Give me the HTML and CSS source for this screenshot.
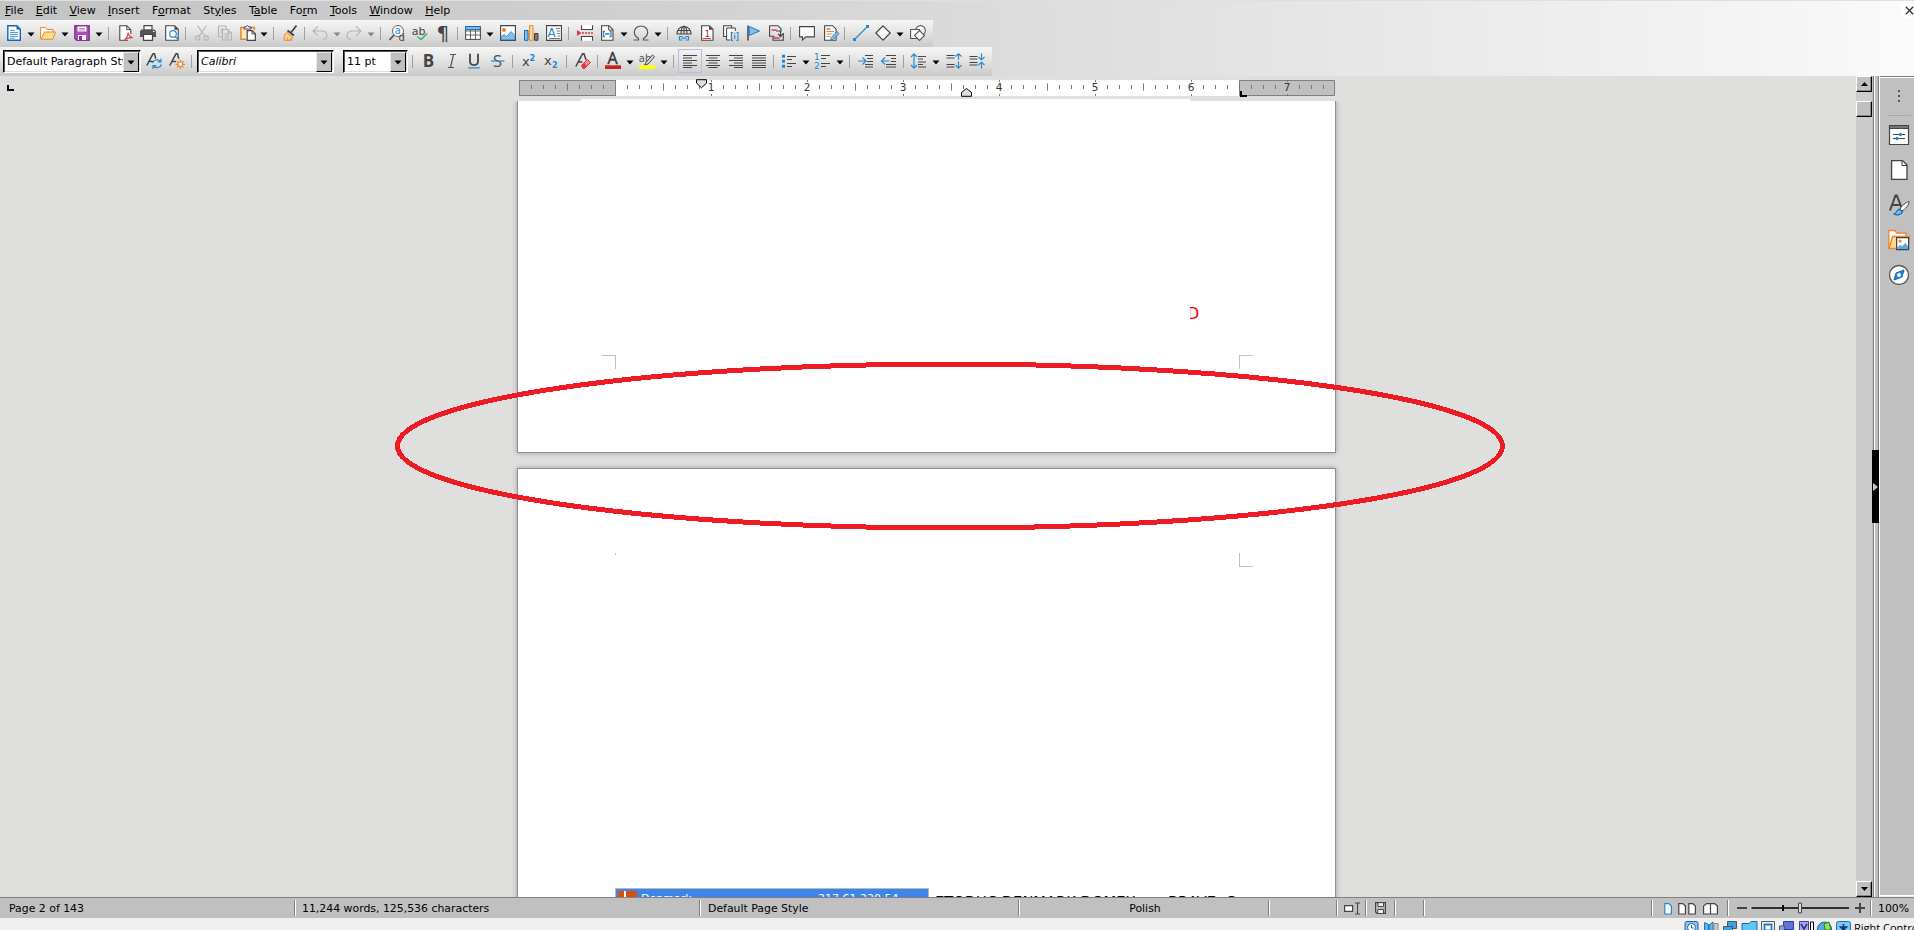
FILE: index.html
```html
<!DOCTYPE html>
<html lang="en">
<head>
  <meta charset="UTF-8">
  <title>Writer</title>
  <link rel="stylesheet" href="styles.css">
</head>
<body>

<!-- Shared symbols -->
<svg class="defs" width="0" height="0">
  <symbol id="arrow" viewBox="0 0 8 5"><path d="M.5 .5h7L4 4.500z"/></symbol>
</svg>

<div class="app">

  <header class="header">
    <nav class="menubar">
      <span><u>F</u>ile</span>
      <span><u>E</u>dit</span>
      <span><u>V</u>iew</span>
      <span><u>I</u>nsert</span>
      <span>F<u>o</u>rmat</span>
      <span>St<u>y</u>les</span>
      <span>T<u>a</u>ble</span>
      <span>Fo<u>r</u>m</span>
      <span><u>T</u>ools</span>
      <span><u>W</u>indow</span>
      <span><u>H</u>elp</span>
      <button class="close"><svg width="9" height="9" viewBox="0 0 9 9"><path d="M.8 .8l7.400 7.400M8.200 .8L.8 8.200" stroke="#333" stroke-width="1.300"/></svg></button>
    </nav>

    <!-- Standard toolbar -->
    <div class="toolbar standard">
      <svg class="icon" viewBox="0 0 16 16"><path d="M1.800 .7h9l3.500 3.500v11.100H1.800z" fill="#fff" stroke="#1068b5" stroke-width="1.400"/><path d="M10.500 .5v4h4z" fill="#1068b5"/><path d="M4 5.500h5M4 7.500h8M4 9.500h8M4 11.500h8M4 13.200h5" stroke="#3f93d4" stroke-width=".9"/></svg>
      <svg class="drop"><use href="#arrow"/></svg>
      <svg class="icon" viewBox="0 0 16 16"><path d="M.6 14V2.500h5l1.500 2h6V7" fill="#fff" stroke="#ed8733"/><path d="M.8 14.300L4.500 7h11l-2.600 7.300z" fill="#fadc8e" stroke="#ed8733"/></svg>
      <svg class="drop"><use href="#arrow"/></svg>
      <svg class="icon" viewBox="0 0 16 16"><path d="M.8 .8h14.400v14.400H2.600L.8 13.400z" fill="#a84fb5" stroke="#8d2f9c" stroke-width="1.400"/><path d="M3.500 1.500h9v5h-9z" fill="#fff"/><path d="M5 3.500h6M5 5h6" stroke="#8d2f9c" stroke-width=".6"/><path d="M4 10h8v5H4z" fill="#fff"/><path d="M5 11h3v4H5z" fill="#8d2f9c"/></svg>
      <svg class="drop"><use href="#arrow"/></svg>
      <i class="sep"></i>
      <svg class="icon" viewBox="0 0 16 16"><path d="M10 15.300H1.800V.7h7l4 4V9" fill="#fff" stroke="#444" stroke-width="1.100"/><path d="M8.800 .7v4h4" fill="none" stroke="#444"/><path d="M6.500 14.800C9 13 10.500 9.500 9.800 7.500c1 3 2.500 5 5 5.200-2.800-.4-6 .5-8.300 2.100z" fill="none" stroke="#dd3b42" stroke-width="1.100"/></svg>
      <svg class="icon" viewBox="0 0 16 16"><path d="M4 .7h8V5H4z" fill="#fff" stroke="#444" stroke-width="1.200"/><path d="M1.500 4.500h13L16 6v6h-3v-2H3v2H0V6z" fill="#555"/><path d="M3.500 9.500h9v5.800h-9z" fill="#fff" stroke="#444" stroke-width="1.200"/><path d="M13 6.500h1.500" stroke="#fff"/></svg>
      <svg class="icon" viewBox="0 0 16 16"><path d="M1.700 .7h9l3.500 3.500v11.100H1.700z" fill="#fff" stroke="#444" stroke-width="1.100"/><path d="M10.500 .7v4h4z" fill="#444"/><circle cx="9" cy="9" r="3.300" fill="#fff" stroke="#2a8dd0" stroke-width="1.200"/><path d="M11.300 11.500l3.500 3.500" stroke="#2a8dd0" stroke-width="1.500"/></svg>
      <i class="sep"></i>
      <svg class="icon off" viewBox="0 0 16 16"><path d="M3.500 .5l7.500 11M12.500 .5L5 11.500"/><circle cx="3.800" cy="13" r="2.100"/><circle cx="12.200" cy="13" r="2.100"/></svg>
      <svg class="icon off" viewBox="0 0 16 16"><path d="M5 11.500H1.500V1h7.500v3M5.500 4.500H11l3.500 3.500v7h-9zM11 4.500V8h3.500M7.500 9h5M7.500 11h5M7.500 13h5M3.500 4h3M3.500 6H5M3.500 8H5"/></svg>
      <svg class="icon" viewBox="0 0 16 16"><path d="M6 14.300H.9V2.500h13.500V5" fill="#fde9c8" stroke="#e8872f" stroke-width="1.500"/><path d="M4 4V2h2L7.500 .5 9 2h2v2z" fill="#fff" stroke="#444"/><path d="M7.200 5.600h5l3.100 3.100v6.600H7.200z" fill="#fff" stroke="#444" stroke-width="1.200"/><path d="M12 5.500v3.300h3.300" fill="none" stroke="#444"/></svg>
      <svg class="drop"><use href="#arrow"/></svg>
      <i class="sep"></i>
      <svg class="icon" viewBox="0 0 16 16"><path d="M14.500 .5L9 7.500" stroke="#444" stroke-width="1.800"/><path d="M5.500 5.500l6.500 5" stroke="#444" stroke-width="2"/><path d="M4.500 7.500l6 4.500-1 3.300H2.500C1.500 12 2.500 9 4.500 7.500z" fill="#fbd08b" stroke="#ed8733"/><path d="M5 15l1-3M8 15l.5-2" stroke="#ed8733" stroke-width=".8"/></svg>
      <i class="sep"></i>
      <svg class="icon off" viewBox="0 0 16 16"><path d="M6 1.500L1 6l5 4.500M1 6h9c3 0 5 2 5 4.500S13 14.500 11 14.500"/></svg>
      <svg class="drop gray"><use href="#arrow"/></svg>
      <svg class="icon off" viewBox="0 0 16 16"><path d="M10 1.500L15 6l-5 4.500M15 6H6c-3 0-5 2-5 4.500S3 14.500 5 14.500"/></svg>
      <svg class="drop gray"><use href="#arrow"/></svg>
      <i class="sep"></i>
      <svg class="icon" viewBox="0 0 16 16"><circle cx="9" cy="6" r="5.500" fill="#fff" stroke="#666"/><path d="M5 10L.5 15" stroke="#444" stroke-width="1.500"/><text x="5.800" y="9" font-size="10" fill="#2488d0">a</text><text x="9.500" y="16" font-size="10" fill="#444">d</text></svg>
      <svg class="icon" viewBox="0 0 16 16"><text x="-.2" y="9.500" font-size="11" fill="#444">ab</text><path d="M5.500 11.500l3.500 3 6.200-6" fill="none" stroke="#3fae5a" stroke-width="1.400"/></svg>
      <svg class="icon" viewBox="0 0 16 16"><text x="1.500" y="14.500" font-size="20" fill="#444">¶</text></svg>
      <i class="sep"></i>
      <svg class="icon" viewBox="0 0 16 16"><path d="M.6 1.600h14.800v12.800H.6z" fill="#fff" stroke="#444"/><path d="M.5 6h15M.5 10h15M5.500 4v10M10.500 4v10" stroke="#555" stroke-width=".9"/><path d="M.6 1.600h14.800v3H.6z" fill="#83beec" stroke="#1068b5"/></svg>
      <svg class="drop"><use href="#arrow"/></svg>
      <svg class="icon" viewBox="0 0 16 16"><path d="M.6 .6h14.800v14.800H.6z" fill="#fff" stroke="#444" stroke-width="1.100"/><circle cx="4" cy="5" r="2" fill="#ed8733"/><path d="M1.200 14.800v-3L4 9.500l2.500 2 4.500-5 3.800 4v4.300z" fill="#83beec" stroke="#2a7fc0" stroke-width=".8"/></svg>
      <svg class="icon" viewBox="0 0 16 16"><path d="M1.500 5.500H5v9.800H1.500z" fill="#83beec" stroke="#1068b5"/><path d="M6.500 .6H10v14.700H6.500z" fill="#fadc8e" stroke="#ed8733"/><path d="M11.500 8.500H15v6.800h-3.500z" fill="#777" stroke="#444"/></svg>
      <svg class="icon" viewBox="0 0 16 16"><path d="M.6 .6h14.800v14.800H.6z" fill="#fff" stroke="#444" stroke-width="1.100"/><text x="1.500" y="12" font-size="12" fill="#2488d0">A</text><path d="M10 3.500h4M10.500 6h3.500M11 8.500h3M11.500 11h2.500M3 13.500h11" stroke="#666" stroke-width=".9"/></svg>
      <i class="sep"></i>
      <svg class="icon" viewBox="0 0 16 16"><path d="M4.500 .2v4.300h11V.2M4.500 15.800v-4.300h11v4.300" fill="#fff" stroke="#444" stroke-width="1.100"/><path d="M0 5l4.500 3L0 11z" fill="#dd3b42"/><path d="M5 8h11" stroke="#dd3b42" stroke-width="1.400" stroke-dasharray="2 1"/></svg>
      <svg class="icon" viewBox="0 0 16 16"><path d="M2.600 .7H10l4 4v10.600H2.600z" fill="#fff" stroke="#444" stroke-width="1.100"/><path d="M9.700 .7v4.300H14" fill="none" stroke="#444"/><path d="M6 6.500H4.500v5H6M10.500 6.500H12v5h-1.500M6 9h4.500" fill="none" stroke="#2488d0" stroke-width="1.300"/></svg>
      <svg class="drop"><use href="#arrow"/></svg>
      <svg class="icon" viewBox="0 0 16 16"><path d="M.5 15h5v-1.500C3 12 1.300 9.800 1.300 7 1.300 3.500 4.200 1 8 1s6.700 2.500 6.700 6c0 2.800-1.700 5-4.200 6.500V15h5" fill="none" stroke="#555" stroke-width="1.200"/></svg>
      <svg class="drop"><use href="#arrow"/></svg>
      <i class="sep"></i>
      <svg class="icon" viewBox="0 0 16 16"><path d="M1 9a7 7.500 0 0 1 14 0zM1.500 5.500h13M8 1v8M5 9c0-4 1-7 3-8 2 1 3 4 3 8" fill="none" stroke="#444" stroke-width="1.100"/><path d="M6.500 11.500h-3v3.500h3M9.500 11.500h3v3.500h-3M5.500 13.200h5" fill="none" stroke="#2488d0" stroke-width="1.200"/></svg>
      <svg class="icon" viewBox="0 0 16 16"><path d="M2.600 .7h7.900l3.500 3.500v11.100H2.600z" fill="#fff" stroke="#444" stroke-width="1.100"/><path d="M10 .7v4h4z" fill="#444"/><path d="M4 13.500h8" stroke="#dd3b42"/><text x="5.500" y="11.500" font-size="9" fill="#c9211e">1</text></svg>
      <svg class="icon" viewBox="0 0 16 16"><path d="M3 11.500H.6V.7h8V3" fill="#fff" stroke="#444" stroke-width="1.100"/><path d="M3.600 3h8.700v4H7v8H3.600z" fill="#fff"/><path d="M7 15H3.600V3h8.700v3" fill="none" stroke="#444"/><path d="M10 7.500H8.500v7.900H10M13.500 7.500H15v7.900h-1.500M11.700 10v4M11.700 8v1" fill="none" stroke="#2488d0" stroke-width="1.100"/></svg>
      <svg class="icon" viewBox="0 0 16 16"><path d="M2 .5v15" stroke="#444" stroke-width="1.500"/><path d="M3.200 1.500L13.500 6 3.200 10.500z" fill="#83beec" stroke="#1f79c4"/></svg>
      <svg class="icon" viewBox="0 0 16 16"><path d="M1.600 .7h8.400l3 3v3M1.600 .7v10.600h5M5 12v3.300h10.300V8" fill="none" stroke="#444" stroke-width="1.100"/><path d="M3.500 5h5M5.500 13h6" stroke="#dd3b42" stroke-width="1.500"/><path d="M8 6h4.500v5M10 8.800l2.500 2.700L15 8.800" fill="none" stroke="#444" stroke-width="1.200"/></svg>
      <i class="sep"></i>
      <svg class="icon" viewBox="0 0 16 16"><path d="M.6 1.600h14.800v10.300H7L3.500 15v-3.100H.6z" fill="#fff" stroke="#444" stroke-width="1.100"/></svg>
      <svg class="icon" viewBox="0 0 16 16"><path d="M1.600 .7h8l3.500 3.500v11.100H1.600z" fill="#fff" stroke="#444" stroke-width="1.100"/><path d="M3.500 4h4" stroke="#555"/><path d="M3.500 6.500h7.500M3.500 9h6M3.500 11.500h4" stroke="#ed8733" stroke-width="1.200"/><path d="M7.500 15.500l.8-3 5.700-6 2 2-5.700 6z" fill="#83beec" stroke="#2a7fc0"/></svg>
      <i class="sep"></i>
      <svg class="icon" viewBox="0 0 16 16"><path d="M1.500 14.500l13-13" stroke="#2a8dd0" stroke-width="1.200"/><path d="M0 13h3v3H0zM13 0h3v3h-3z" fill="#2488d0"/></svg>
      <svg class="icon" viewBox="0 0 16 16"><path d="M8 .8L15.200 8 8 15.200.8 8z" fill="#fff" stroke="#444" stroke-width="1.200"/></svg>
      <svg class="drop"><use href="#arrow"/></svg>
      <svg class="icon" viewBox="0 0 16 16"><circle cx="10.500" cy="5.500" r="4.900" fill="#fff" stroke="#555" stroke-width="1.100"/><path d="M.6 4.500h9v9h-9z" fill="#fff" stroke="#555" stroke-width="1.100"/><path d="M9.500 5.500l5 5-5 5-5-5z" fill="#fff" stroke="#555" stroke-width="1.100"/></svg>
    </div>

    <!-- Formatting toolbar -->
    <div class="toolbar formatting">
      <div class="combo style-combo"><span>Default Paragraph Style</span><b><svg class="drop"><use href="#arrow"/></svg></b></div>
      <svg class="icon" viewBox="0 0 16 16"><path d="M.8 12.500L7 .8h1.500l1.200 5M3 8.500h4" fill="none" stroke="#444" stroke-width="1.500"/><path d="M6.500 10a4.500 4 0 0 1 8-1.500M15 5.500v3.300h-3.300M15.500 11.500a4.500 4 0 0 1-8 1.500M7 16v-3.300h3.300" fill="none" stroke="#2488d0" stroke-width="1.200"/></svg>
      <svg class="icon" viewBox="0 0 16 16"><path d="M.8 12.500L7 .8h1.500l1.200 5M3 8.500h4" fill="none" stroke="#444" stroke-width="1.500"/><circle cx="11.300" cy="11.300" r="2.300" fill="#fff" stroke="#ed8733" stroke-width="1.200"/><path d="M11.300 6.500V9M11.300 13.600V16M6.500 11.300H9M13.600 11.300H16M8 8l1.500 1.500M13 13l1.600 1.600M14.600 8L13 9.500M9.500 13L8 14.600" stroke="#ed8733" stroke-width="1.200"/></svg>
      <i class="sep"></i>
      <div class="combo font-combo"><em>Calibri</em><b><svg class="drop"><use href="#arrow"/></svg></b></div>
      <div class="combo size-combo"><span>11 pt</span><b><svg class="drop"><use href="#arrow"/></svg></b></div>
      <i class="sep"></i>
      <svg class="icon" viewBox="0 0 16 16"><text x="1.800" y="14" font-size="17" font-weight="bold" class="sans" fill="#444">B</text></svg>
      <svg class="icon" viewBox="0 0 16 16"><path d="M6 1.500h6M4 14.500h6M9.500 1.500L6.500 14.500" stroke="#555" stroke-width="1.200"/></svg>
      <svg class="icon" viewBox="0 0 16 16"><path d="M4 .8v7.500c0 5 8 5 8 0V.8" fill="none" stroke="#444" stroke-width="1.800"/><path d="M2 14.900h12" stroke="#2488d0" stroke-width="1.200"/></svg>
      <svg class="icon" viewBox="0 0 16 16"><text x="2.800" y="14" font-size="17" class="sans" fill="#555">S</text><path d="M1 8h13.500" stroke="#2488d0" stroke-width="1.200"/></svg>
      <i class="sep"></i>
      <svg class="icon" viewBox="0 0 16 16"><text x="0" y="12.500" font-size="13" fill="#444">x</text><text x="7.500" y="7.500" font-size="8" font-weight="bold" fill="#2488d0">2</text></svg>
      <svg class="icon" viewBox="0 0 16 16"><text x="0" y="11.500" font-size="13" fill="#444">x</text><text x="8" y="15" font-size="8" font-weight="bold" fill="#2488d0">2</text></svg>
      <i class="sep"></i>
      <svg class="icon" viewBox="0 0 16 16"><path d="M.8 13.500L7.500 .8H9l2 6M3.500 9h4" fill="none" stroke="#444" stroke-width="1.500"/><path d="M6.500 12.500l6-6 3 3-6 6h-1.500z" fill="#f28b8f" stroke="#dd2b33"/><path d="M6.500 12.500l2.500-2.500 3 3-2.500 2.500h-1.500z" fill="#dd3b42"/></svg>
      <i class="sep"></i>
      <svg class="icon" viewBox="0 0 16 16"><text x="2.500" y="11" font-size="16" class="sans" fill="#333" stroke="#333" stroke-width=".4">A</text><path d="M0 12.300h16v3.700H0z" fill="#c9211e"/></svg>
      <svg class="drop"><use href="#arrow"/></svg>
      <svg class="icon" viewBox="0 0 16 16"><text x="-.2" y="8.500" font-size="10" fill="#555">ab</text><path d="M7 9.500l6.500-7.500 2 1.800L9 11l-3.500 1z" fill="#ddd" stroke="#444"/><path d="M0 12.300h16v3.700H0z" fill="#ff0"/></svg>
      <svg class="drop"><use href="#arrow"/></svg>
      <i class="sep"></i>
      <svg class="icon active" viewBox="0 0 16 16"><path class="lines" d="M1 2.500h14M1 5h9M1 7.500h14M1 10h9M1 12.500h14M1 14.500h9"/></svg>
      <svg class="icon" viewBox="0 0 16 16"><path class="lines" d="M1 2.500h14M3.500 5h9M1 7.500h14M3.500 10h9M1 12.500h14M3.500 14.500h9"/></svg>
      <svg class="icon" viewBox="0 0 16 16"><path class="lines" d="M1 2.500h14M6 5h9M1 7.500h14M6 10h9M1 12.500h14M6 14.500h9"/></svg>
      <svg class="icon" viewBox="0 0 16 16"><path class="lines" d="M1 2.500h14M1 5h14M1 7.500h14M1 10h14M1 12.500h14M1 14.500h14"/></svg>
      <i class="sep"></i>
      <svg class="icon" viewBox="0 0 16 16"><path d="M1 1.800h3v3H1zM1 6.800h3v3H1zM1 11.800h3v3H1z" fill="#2488d0"/><path class="lines" d="M6 3.500h9M6 6.500h5M6 10.500h9M6 13.500h5"/></svg>
      <svg class="drop"><use href="#arrow"/></svg>
      <svg class="icon" viewBox="0 0 16 16"><text x="0" y="7.200" font-size="9" fill="#2488d0">1</text><text x="0" y="16" font-size="9" fill="#2488d0">2</text><path class="lines" d="M7 2.500h9M7 5.500h5M7 10.500h9M7 13.500h5"/></svg>
      <svg class="drop"><use href="#arrow"/></svg>
      <i class="sep"></i>
      <svg class="icon" viewBox="0 0 16 16"><path class="lines" d="M8 2.500h8M10 5.500h6M10 8.500h6M8 11.500h8M8 14h8"/><path class="blue" d="M1 8h8M5.500 4.500L9 8l-3.500 3.500"/></svg>
      <svg class="icon" viewBox="0 0 16 16"><path class="lines" d="M6 2.500h10M11 5.500h5M11 8.500h5M6 11.500h10M6 14h10"/><path class="blue" d="M9.500 8h-8M5 4.500L1.500 8 5 11.500"/></svg>
      <i class="sep"></i>
      <svg class="icon" viewBox="0 0 16 16"><path class="lines" d="M8 3.500h8M8 6h5M8 9h8M8 11.500h5M8 14h8"/><path class="blue" d="M4 .8v14.400M1 4l3-3.200L7 4M1 12l3 3.200L7 12"/></svg>
      <svg class="drop"><use href="#arrow"/></svg>
      <svg class="icon" viewBox="0 0 16 16"><path class="lines" d="M.5 2.500h8M.5 5h8M.5 11.500h8M.5 14h8"/><path class="blue" d="M12.500 .8v6M9.500 3.500l3-2.700 3 2.700M12.500 8.500v6.500M9.500 12.200l3 3 3-3"/></svg>
      <svg class="icon" viewBox="0 0 16 16"><path class="lines" d="M.5 3.500h8M.5 6h8M.5 9.500h8M.5 12h8"/><path class="blue" d="M12.500 .5v6M9.500 4l3 2.800 3-2.800M12.500 15.500v-6M9.500 12l3-2.800 3 2.800"/></svg>
    </div>
  </header>

  <div class="workspace">
    <main class="canvas">
      <div class="ruler-row">
        <svg class="tab-type" width="7" height="6"><path d="M0 0h2v4h5v2H0z"/></svg>
        <svg class="ruler" width="816" height="19" viewBox="519 80 816 19">
          <defs>
            <pattern id="ticks" x="615" y="80" width="96" height="16" patternUnits="userSpaceOnUse">
              <path d="M12.500 5v4M24.500 5v4M36.500 5v4M60.500 5v4M72.500 5v4M84.500 5v4M48.500 3.500v7M.5 0v2M.5 14v2" stroke="#777"/>
            </pattern>
          </defs>
          <path d="M616 80h623v16H616z" fill="#fff"/>
          <path d="M519.500 80.500h96v15h-96zM1239.500 80.500h95v15h-95z" fill="#c0c0c0" stroke="#808080"/>
          <path d="M521 80h813v16H521z" fill="url(#ticks)"/>
          <g class="digits">
            <text x="711" y="90.500">1</text><text x="807" y="90.500">2</text><text x="903" y="90.500">3</text><text x="999" y="90.500">4</text><text x="1095" y="90.500">5</text><text x="1191" y="90.500">6</text><text x="1287" y="90.500">7</text>
          </g>
          <path d="M696.500 79.700h10v3.500l-5 4.500-5-4.500z" fill="#dfdfdd" stroke="#000"/>
          <path d="M961.500 96.300h10v-3.800l-5-4-5 4z" fill="#dfdfdd" stroke="#000"/>
          <path d="M1240 91h2v4h5v2h-7z"/>
        </svg>
      </div>

      <div class="page-edge"></div>
      <section class="page page-one">
        <i class="crop crop-bl"></i>
        <i class="crop crop-br"></i>
        <div class="stray"><span>D</span></div>
      </section>
      <section class="page page-two">
        <i class="crop crop-dot"></i>
        <i class="crop crop-tr"></i>
        <div class="row">
          <div class="selected">
            <i class="flag"></i>
            <span class="country">Denmark</span>
            <span class="ip">217.61.220.54</span>
          </div>
          <span class="note">ETODUC DENMARK DOMEX</span>
          <span class="note brave">BRAVE &nbsp;C</span>
        </div>
      </section>

      <svg class="ellipse" width="1112" height="170" viewBox="0 0 1112 170"><ellipse cx="556" cy="85" rx="552.500" ry="82" fill="none" stroke="#ed1c24" stroke-width="5" shape-rendering="crispEdges"/></svg>
    </main>

    <div class="scrollbar">
      <b class="sbtn"><svg width="7" height="4"><path d="M3.500 0L7 4H0z"/></svg></b>
      <b class="sbtn thumb"></b>
      <b class="sbtn last"><svg width="7" height="4"><path d="M0 0h7L3.500 4z"/></svg></b>
    </div>
    <div class="splitter"><div class="grip"><svg width="5" height="8"><path d="M0 0l5 4-5 4z" fill="#ccc"/></svg></div></div>

    <aside class="sidebar">
      <svg class="dots" width="2" height="14"><path d="M0 0h2v2H0zM0 5h2v2H0zM0 10h2v2H0z" fill="#555"/></svg>
      <hr>
      <svg class="side-icon" viewBox="0 0 22 22"><path d="M1.500 1.500h19v19h-19z" fill="#fff" stroke="#444" stroke-width="1.200"/><path d="M1.500 1.500h19v3h-19z" fill="#777" stroke="#444"/><path d="M5 10.500h12M5 14.500h12" stroke="#444" stroke-width="1.200"/><circle cx="12.500" cy="10.500" r="1.700" fill="#2488d0"/><circle cx="9" cy="14.500" r="1.700" fill="#2488d0"/></svg>
      <svg class="side-icon" viewBox="0 0 22 22"><path d="M3.600 1.600h11l4.400 4.400v14.400H3.600z" fill="#fff" stroke="#444" stroke-width="1.300"/><path d="M14 1.600V6.500h5" fill="none" stroke="#444"/></svg>
      <svg class="side-icon" viewBox="0 0 22 22"><path d="M2 16.500L7.500 1.500h1.300l4.700 12M4.500 11h7" fill="none" stroke="#444" stroke-width="2"/><path d="M21 7.500c-3 .5-8 5-9 7.500l2 2c3-1.500 7.500-6.500 7-9.500z" fill="#fff" stroke="#444"/><path d="M12 15.500c-3-.5-3 3.500-6 4.500 3 1.500 7.500 1 8.500-2.500z" fill="#83beec" stroke="#1068b5" stroke-width="1.200"/></svg>
      <svg class="side-icon" viewBox="0 0 22 22"><path d="M.8 19.500V1.500h6l2 2.500h9v4" fill="#fff" stroke="#ed8733" stroke-width="1.400"/><path d="M1 19.500L4.500 7.500h17l-2 12z" fill="#fadc8e" stroke="#ed8733" stroke-width="1.400"/><path d="M8.600 8.600h12v12h-12z" fill="#fff" stroke="#444" stroke-width="1.200"/><circle cx="12" cy="12" r="1.600" fill="#ed8733"/><path d="M9.300 20v-2l3-2 2 1 3-3 2.700 3v3z" fill="#5aa9e0"/></svg>
      <svg class="side-icon" viewBox="0 0 22 22"><circle cx="11" cy="11" r="9.500" fill="#fff" stroke="#555" stroke-width="1.300"/><path d="M16 6l-2 7-8 3 2-7z" fill="#2488d0" stroke="#1068b5"/><circle cx="11" cy="11" r="1.900" fill="#fff"/></svg>
    </aside>
  </div>

  <footer class="statusbar">
    <span class="cell c-page">Page 2 of 143</span>
    <span class="cell c-words">11,244 words, 125,536 characters</span>
    <span class="cell c-style">Default Page Style</span>
    <span class="cell c-lang">Polish</span>
    <span class="cell c-blank"></span>
    <span class="cell c-icon"><svg width="17" height="13"><path d="M.6 3.600h8v5.800h-8z" fill="#fff" stroke="#444" stroke-width="1.200"/><path d="M11 1h5M11 12h5M13.500 1v11" stroke="#444"/></svg></span>
    <span class="cell c-icon c-save"><svg width="11" height="12"><path d="M.6 .6h9.800v10.800H2L.6 10z" fill="none" stroke="#444" stroke-width="1.200"/><path d="M3 .6h5.500v4H3zM2.800 7.500h5.700v4H2.800z" fill="#eee" stroke="#444"/></svg></span>
    <span class="cell c-icon"></span>
    <span class="cell c-fill"></span>
    <span class="cell c-view">
      <svg width="55" height="13"><g fill="#fff" stroke="#444" stroke-width="1.200"><path d="M.8 1.600h4L7.400 4v8H.8z" stroke="#2488d0"/><path d="M14.800 1.600h4l2.600 2.400v8h-6.600zM24.800 1.600h4l2.600 2.400v8h-6.600zM46.500 12V1.600h-4L39.600 4v8zM46.500 12V1.600h4L53.400 4v8z"/></g></svg>
    </span>
    <span class="cell c-zoom">
      <svg width="130" height="14"><path d="M0 7h10M118 7h10M123 2v10" stroke="#444" stroke-width="2"/><path d="M14.500 7H112" stroke="#000" stroke-width="1.500"/><path d="M46 4v6" stroke="#000" stroke-width="2"/><path d="M61.500 2h3v10h-3z" fill="#ddd" stroke="#444"/></svg>
    </span>
    <span class="cell c-percent">100%</span>
  </footer>

  <div class="host-bar">
    <svg width="168" height="9">
      <rect x="1" y=".5" width="13" height="12" rx="2" fill="#8dc4ee" stroke="#1c5fb0"/><circle cx="7.500" cy="6.500" r="4" fill="#fff" stroke="#1c5fb0"/><path d="M7.500 4v3h2" fill="none" stroke="#1c5fb0"/>
      <path d="M20.500 1.500l4 2v6h-4zM25 4l4-3v9h-4z" fill="#5bb5e8" stroke="#2a70b8"/><path d="M30 2.500h4V10h-4z" fill="#ccc" stroke="#888"/>
      <path d="M43.500 .5h9v7h-9z" fill="#3aa5e0" stroke="#555"/><path d="M39.500 5.500h9V10h-9z" fill="#3aa5e0" stroke="#555"/>
      <path d="M58 10V2.500h7l2-2h6V10z" fill="#5ec5f5" stroke="#2460b0"/>
      <path d="M77.500 .5h13v10h-13z" fill="#eee" stroke="#555"/><path d="M80.500 3.500h7v6h-7z" fill="#fff" stroke="#1c80d0" stroke-width="1.800"/>
      <path d="M99.500 .5h10v8h-10z" fill="#5d74d8" stroke="#2c3fa0"/><path d="M95.500 5h5v5h-5z" fill="#8ca0e8" stroke="#555"/>
      <path d="M115.500 .5h9v10h-9z" fill="#aaa6e8" stroke="#4a3fa0"/><path d="M117 3l3 5 3-5" fill="none" stroke="#33288a" stroke-width="1.500"/><path d="M126.500 1h3v9h-3z" fill="#fff" stroke="#000"/>
      <circle cx="140.500" cy="8" r="7" fill="#5aa8e0" stroke="#2460b0"/><path d="M140 3l5-2 2 8h-6z" fill="#9ade55" stroke="#2c7d25"/>
      <rect x="152.500" y=".5" width="14" height="12" rx="2" fill="#7cc8f4" stroke="#1c6fb0"/><path d="M159.500 3v5M156.500 6h6l-3 3z" fill="#123a70" stroke="#123a70" stroke-width="1.500"/>
    </svg>
    <span>Right Control</span>
  </div>

</div>

</body>
</html>
```
FILE: styles.css
```css
* {
  box-sizing: border-box;
}

body {
  margin: 0;
  overflow: hidden;
  font-family: "DejaVu Sans", sans-serif;
  font-size: 11px;
  color: #000;
}

.defs {
  position: absolute;
}

.app {
  display: flex;
  flex-direction: column;
  height: 930px;
  overflow: hidden;
  background: #efefef;
}

/* Header */
.header {
  height: 76px;
  background: linear-gradient(to right, #c3c3c3 0, #d0d0d0 640px, #dcdcdc 1010px, #f6f6f6 1814px, #fbfbfb 100%);
  border-top: 1px solid #dedee4;
}

.menubar {
  display: flex;
  gap: 12.4px;
  height: 19px;
  padding-left: 5px;
  line-height: 19px;
}

.menubar u {
  text-underline-offset: 1px;
}

.close {
  width: 13px;
  height: 15px;
  margin: 2px 0 0 auto;
  padding: 0 0 0 3px;
  border: 0;
  background: #fff;
  overflow: hidden;
  line-height: 0;
}

.toolbar {
  display: grid;
  align-items: center;
  background: linear-gradient(#f6f6f6, #e4e4e4 45%, #c9c9c9);
}

.standard {
  width: 933px;
  height: 27px;
  padding-left: 6px;
  grid-template-columns:
    21px 13px 21px 13px 21px 13px 10px 22px 24px 21px 9px 23px 23px 20px 13px 9px 22px 8px
    21px 13px 21px 13px 9px 23px 23px 22px 8px 21px 14px 23px 23px 22px 9px 22px 21px 13px
    21px 13px 9px 23px 24px 23px 22px 22px 9px 24px 21px 9px 22px 21px 14px 23px;
}

.formatting {
  width: 992px;
  height: 29px;
  padding-left: 3px;
  grid-template-columns:
    143px 23px 22px 6px 146px 69px 9px 23px 22px 24px 22px 10px 22px 22px 9px 22px 8px
    21px 13px 21px 13px 9px 23px 23px 23px 22px 8px 21px 12px 22px 13px 8px 23px 23px
    7px 22px 14px 23px 23px;
}

.icon {
  display: block;
  width: 16px;
  height: 16px;
  margin-bottom: 1px;
  overflow: visible;
}

.icon .sans {
  font-family: "Open Sans", sans-serif;
}

.icon .lines {
  fill: none;
  stroke: #444;
  stroke-width: 1.1;
}

.icon .blue {
  fill: none;
  stroke: #2488d0;
  stroke-width: 1.15;
}

.off {
  fill: none;
  stroke: #b4b4b4;
  stroke-width: 1.1;
}

.active {
  outline: 1px solid #bbbbe0;
  outline-offset: 3px;
}

.drop {
  display: block;
  width: 8px;
  height: 5px;
  position: relative;
  top: 1px;
}

.gray {
  fill: #888;
}

.sep {
  width: 1px;
  height: 13px;
  background: #a0a0a0;
}

.combo {
  display: flex;
  height: 23px;
  background: #fff;
  border: 1px solid #000;
  border-right-color: #fff;
  border-bottom-color: #fff;
  box-shadow: inset 1px 1px 0 #555, inset -1px -1px 0 #ddd;
  line-height: 21px;
  white-space: nowrap;
}

.combo span, .combo em {
  flex: 1;
  overflow: hidden;
  padding-left: 3px;
  font-size: 11px;
}

.combo b {
  display: flex;
  align-items: center;
  justify-content: center;
  width: 16px;
  height: 20px;
  margin: 1px 1px 0 0;
  background: #c0c0c0;
  border: 1px solid #e8e8e8;
  border-right-color: #000;
  border-bottom-color: #000;
}

.combo .drop {
  top: 0;
}

.style-combo { width: 138px; }
.font-combo { width: 137px; }
.size-combo { width: 65px; }

/* Workspace */
.workspace {
  display: flex;
  height: 821px;
}

.canvas {
  position: relative;
  width: 1856px;
  overflow: hidden;
  background: #dfdfdd;
}

.ruler-row {
  display: flex;
  height: 23px;
  padding-top: 4px;
}

.tab-type {
  margin: 5px 505px 0 7px;
}

.ruler {
  overflow: visible;
}

.digits {
  font-size: 10.5px;
  fill: #333;
  text-anchor: middle;
}

.page-edge {
  width: 609px;
  height: 2px;
  margin-left: 581px;
  background: #fff;
}

.page {
  position: relative;
  width: 819px;
  margin-left: 517px;
  background: #fff;
  border: 1px solid #8e8e8e;
  box-shadow: 0 0 5px rgba(0, 0, 0, 0.3);
}

.page-one {
  height: 352px;
  border-top: 0;
  clip-path: inset(0 -6px -6px -6px);
}

.page-two {
  height: 440px;
  margin-top: 15px;
}

/* Text boundary corners */
.crop {
  position: absolute;
  width: 14px;
  height: 14px;
  border: 0 solid #c0c0c0;
}

.crop-bl {
  left: 84px;
  top: 254px;
  border-width: 1px 1px 0 0;
}

.crop-br {
  left: 721px;
  top: 254px;
  border-width: 1px 0 0 1px;
}

.crop-tr {
  left: 721px;
  top: 84px;
  border-width: 0 0 1px 1px;
}

.crop-dot {
  left: 97px;
  top: 84px;
  width: 1px;
  height: 2px;
  background: #c0c0c0;
}

.stray {
  position: absolute;
  left: 672px;
  top: 203px;
  width: 12px;
  height: 20px;
  overflow: hidden;
  color: #f00;
  font-size: 16px;
  line-height: 20px;
}

.stray span {
  margin-left: -3px;
}

/* Server list row, cut by the bottom of the window */
.row {
  display: flex;
  margin: 419px 0 0 97px;
  white-space: nowrap;
}

.selected {
  display: flex;
  flex: none;
  width: 314px;
  height: 20px;
  padding: 2px 0 0 2px;
  background: #3d85e9;
  border: 1px solid #b8b8b8;
  color: #fff;
  line-height: 16px;
}

.flag {
  width: 19px;
  height: 12px;
  background: linear-gradient(to right, #d2520c 6px, #fff 6px, #fff 8px, #d2520c 8px);
}

.country {
  width: 181px;
  padding-left: 4px;
}

.note {
  flex: none;
  width: 239px;
  padding-left: 6px;
  font-size: 14.7px;
  line-height: 26px;
}

.brave {
  width: 80px;
  padding-left: 0;
}

.ellipse {
  position: absolute;
  left: 394px;
  top: 285px;
}

.scrollbar {
  display: flex;
  flex-direction: column;
  width: 16px;
  background: #ccc;
}

.sbtn {
  display: flex;
  align-items: center;
  justify-content: center;
  height: 16px;
  background: #c0c0c0;
  border: 1px solid #fff;
  border-right-color: #000;
  border-bottom-color: #000;
  box-shadow: inset -1px -1px 0 #888;
}

.thumb {
  margin-top: 9px;
}

.last {
  margin-top: auto;
}

.splitter {
  display: flex;
  align-items: center;
  width: 8px;
  background: linear-gradient(to right, #c0c0c0 1px, #808080 1px, #808080 2px, #fff 2px, #fff 3px, #c0c0c0 3px, #c0c0c0 6px, #808080 6px, #808080 7px, #fff 7px);
}

.grip {
  display: flex;
  align-items: center;
  width: 7px;
  height: 73px;
  padding-left: 1px;
  background: #000;
}

.sidebar {
  display: flex;
  flex-direction: column;
  align-items: center;
  width: 34px;
  height: 820px;
  padding-left: 4px;
  background: #c0c0c0;
  border-top: 1px solid #808080;
  border-bottom: 1px solid #fff;
  box-shadow: inset 0 1px 0 #fff;
}

.dots {
  margin-top: 13px;
  height: 14px;
}

.sidebar hr {
  width: 23px;
  height: 1px;
  margin: 11px 0 8px;
  border: 0;
  background: #a8a8a8;
}

.side-icon {
  flex: none;
  width: 22px;
  height: 22px;
  margin-bottom: 13px;
}

/* Status bar */
.statusbar {
  display: flex;
  align-items: center;
  height: 21px;
  background: #c0c0c0;
  border-top: 1px solid #808080;
  font-size: 10.9px;
}

.cell {
  display: flex;
  align-items: center;
  height: 16px;
  padding-left: 7px;
  border-left: 1px solid #808080;
  box-shadow: inset 1px 0 0 #fff;
}

.c-page {
  width: 294px;
  padding-left: 9px;
  border: 0;
  box-shadow: none;
}

.c-words { width: 405px; }
.c-style { width: 319px; padding-left: 8px; }
.c-lang { width: 250px; justify-content: center; padding-left: 3px; }
.c-blank { width: 68px; }
.c-icon { width: 29px; padding-left: 7px; }
.c-save { padding-left: 9px; }
.c-fill { width: 228px; }
.c-view { width: 76px; padding-left: 12px; }
.c-zoom { width: 143px; padding-left: 9px; }
.c-percent { flex: 1; }

/* Host window indicators */
.host-bar {
  display: flex;
  height: 12px;
  padding: 3px 0 0 1684px;
  overflow: hidden;
  white-space: nowrap;
  font-family: "Open Sans", sans-serif;
  font-size: 11px;
  line-height: 14px;
}

.host-bar svg {
  flex: none;
}

.host-bar span {
  padding-left: 2px;
}
```
